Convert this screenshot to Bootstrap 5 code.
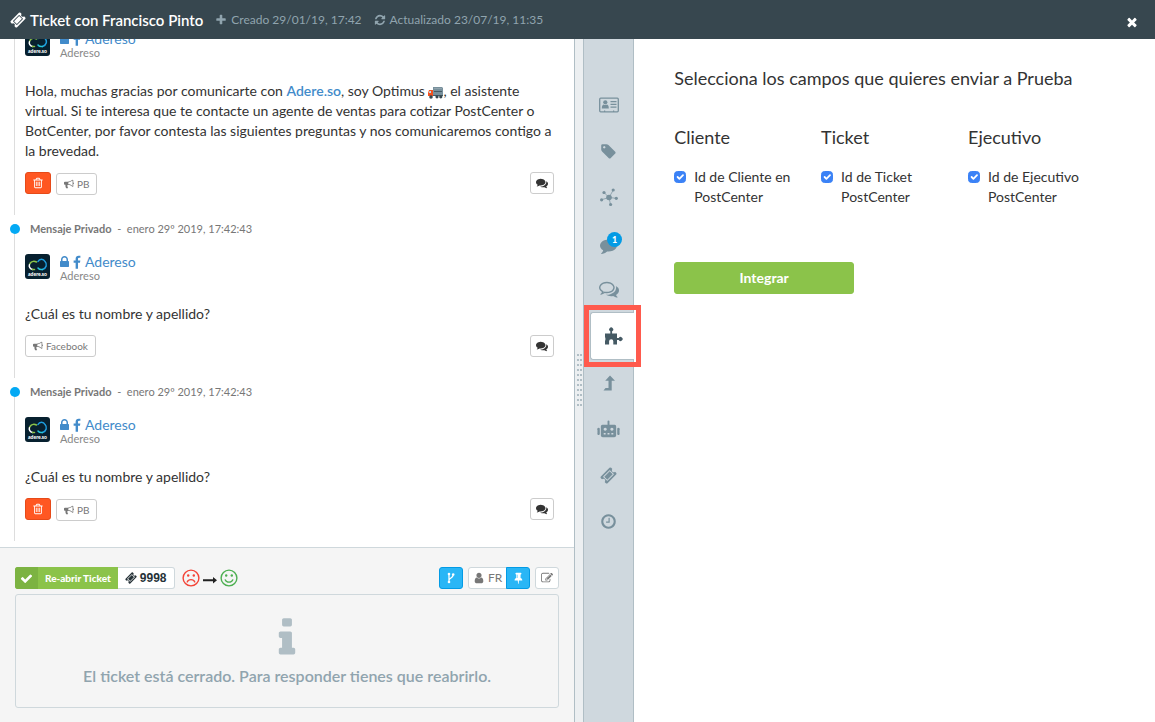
<!DOCTYPE html>
<html lang="es">
<head>
<meta charset="utf-8">
<meta name="viewport" content="width=device-width, initial-scale=1">
<title>Ticket con Francisco Pinto</title>
<link href="https://cdn.jsdelivr.net/npm/bootstrap@5.3.0/dist/css/bootstrap.min.css" rel="stylesheet">
<style>
  :root { --slate: #37474f; --steel: #78909c; --line: #b0bec5; --soft: #cfd8dc; --link: #428bca; --green: #8bc34a; --sky: #29b6f6; }
  body { font-family: Lato, "Liberation Sans", sans-serif; font-size: 14px; line-height: 20px; color: #333; }
  a { color: var(--link); }
  .icon { width: 1em; height: 1em; fill: currentColor; flex: none; display: block; }

  .topbar { background: var(--slate); height: 39px; flex: none; padding: 0 16px 0 10px; }
  .topbar h1 { font-size: 15px; line-height: 20px; font-weight: 600; }
  .topbar .icon { font-size: 12px; }
  .topbar h1 .icon { font-size: 16px; }
  .topbar-meta { color: #90a4ae; font-size: 12px; }
  .topbar .topbar-close .icon { font-size: 14px; }
  .topbar-close { padding-top: 4px; }

  .pane-chat { flex: none; width: 49.8%; border-right: 1px solid var(--line); }
  .pane-form { flex: 1 1 0; min-width: 0; padding: 29px 40px; }

  .timeline { padding: 0 0 6px 14px; }
  .message { border-left: 1px solid #ddd; padding: 0 20px 20px 10px; }
  .message + .message { margin-top: 4px; }
  .message-head { margin: 0 0 15px -15px; gap: 10px; font-size: 11px; line-height: 20px; color: #777; background: linear-gradient(#fff, #fff) 0 0 / 10px 10px no-repeat; }
  .dot { width: 10px; height: 10px; border-radius: 50%; background: #03a9f4; flex: none; }
  .author { gap: 10px; }
  .avatar { width: 25px; height: 25px; }
  .author-name { font-size: 14px; line-height: 16px; gap: 4px; }
  .author-name .icon { width: 9px; }
  .author-name .icon + .icon { width: 8px; }
  .author-sub { font-size: 11px; line-height: 12px; color: #888; }
  .message-text { margin: 22px 0 11px; }
  .message-actions { min-height: 23px; gap: 5px; }
  .truck { width: 15px; height: 13px; vertical-align: -3px; }

  .chip { --bs-btn-padding-x: 7px; --bs-btn-padding-y: 0; --bs-btn-font-size: 10px; --bs-btn-line-height: 20px; --bs-btn-border-radius: 3px;
          --bs-btn-border-color: #ccc; --bs-btn-bg: #fff; --bs-btn-color: #777; display: inline-flex; align-items: center; justify-content: center; gap: 3px; height: 22px; }
  .chip-square { --bs-btn-padding-x: 0; --bs-btn-font-size: 12px; width: 24px; }
  .chip-danger { --bs-btn-bg: #ff5722; --bs-btn-border-color: #e64a19; --bs-btn-color: #fff; width: 26px; }
  .chip-dark { --bs-btn-color: #333; }
  .chip-sky { --bs-btn-bg: var(--sky); --bs-btn-border-color: #039be5; --bs-btn-color: #fff; }
  .chip-footer { --bs-btn-border-color: var(--soft); }
  .chip-owner { --bs-btn-padding-x: 4px; --bs-btn-font-size: 12px; }

  .composer { background: #f5f5f5; border-top: 1px solid var(--soft); padding: 19px 15px 14px; }
  .composer-tools { margin-bottom: 5px; }
  .composer-actions { gap: 5px; }
  .reopen { border: 0; padding: 0; height: 22px; background: var(--green); color: #fff; font-size: 10px; font-weight: 900; border-radius: 3px 0 0 3px; overflow: hidden; }
  .reopen-check { background: #7cb342; width: 23px; height: 22px; font-size: 13px; }
  .reopen-label { padding: 0 7px; }
  .ticket-id { border: 1px solid var(--soft); border-left: 0; background: #fff; height: 22px; padding: 0 7px; gap: 3px; border-radius: 0 3px 3px 0; font: 700 12px/20px "Liberation Sans", sans-serif; color: #263238; }
  .mood { margin-left: 7px; gap: 3px; }
  .mood .icon { font-size: 18px; }
  .mood .mood-arrow { width: 14px; color: #212121; }
  .mood-sad { color: #f44336; }
  .mood-happy { color: #4caf50; }
  .closed-note { border: 1px solid var(--soft); border-radius: 3px; height: 114px; color: #90a4ae; font-size: 16px; font-weight: 600; padding-top: 20px; }
  .closed-note .icon { font-size: 46px; color: var(--line); }
  .closed-note p { padding-top: 5px; }

  .gutter { width: 9px; flex: none; background: #eceff1; border-right: 1px solid var(--line); cursor: col-resize; }
  .grip { width: 5px; height: 54px; background: conic-gradient(from 270deg at 2px 2px, var(--line) 90deg, transparent 0) 0 0 / 3px 5px; }

  .rail { width: 50px; flex: none; background: #cfd8de; border-right: 1px solid var(--line); padding-top: 43px; }
  .rail-item { height: 46px; color: var(--steel); background: none; border: 0; padding: 0; font-size: 20px; }
  .rail-item .icon-sm { font-size: 17px; }
  .rail-item .icon-lg { font-size: 23px; }
  .rail-active { height: 48px; margin: 0 -1px 0 6px; background: #fff; border: solid var(--line); border-width: 1px 0 1px 1px; border-radius: 3px 0 0 3px; color: #455a64; }
  .rail-active::after { content: ""; position: absolute; inset: -8px -7px -8px -7px; border: 5px solid #ff5a4d; pointer-events: none; }
  .rail-count { position: absolute; left: 23px; top: 12px; width: 15px; height: 15px; border-radius: 50%; background: #039be5; color: #fff; font-size: 9px; line-height: 15px; font-weight: 900; }

  .pane-form h2, .pane-form h3 { font-size: 18px; line-height: 20px; font-weight: 400; margin: 0; }
  .pane-form h3 { margin-bottom: 20px; }
  .field-columns { margin-top: 39px; margin-bottom: 55px; }
  .field { display: flex; gap: 8px; }
  .field input { width: 12px; height: 12px; flex: none; margin: 4px 0 0; border-radius: 3px; }
  .field input:checked { background-color: #3b82f6; border-color: #3b82f6; background-size: 12px 12px; }
  .btn-integrate { --bs-btn-bg: var(--green); --bs-btn-border-color: var(--green); --bs-btn-color: #fff; --bs-btn-font-size: 14px; --bs-btn-font-weight: 700; --bs-btn-line-height: 20px; --bs-btn-padding-y: 5px; --bs-btn-border-radius: 3px; width: 180px; }
</style>
</head>
<body class="vh-100 d-flex flex-column overflow-hidden">

<svg class="d-none" aria-hidden="true">
  <symbol id="ticket" viewBox="0 0 1792 1792"><path d="M1024 452l316 316-572 572-316-316zm-211 979l618-618q19-19 19-45t-19-45l-362-362q-18-18-45-18t-45 18l-618 618q-19 19-19 45t19 45l362 362q18 18 45 18t45-18zm889-637l-907 908q-37 37-90.500 37t-90.500-37l-126-126q56-56 56-136t-56-136-136-56-136 56l-125-126q-37-37-37-90.500t37-90.500l907-906q37-37 90.500-37t90.500 37l125 125q-56 56-56 136t56 136 136 56 136-56l126 125q37 37 37 90.500t-37 90.500z"/></symbol>
  <symbol id="check" viewBox="0 0 1792 1792"><path d="M1671 566q0 40-28 68l-724 724-136 136q-28 28-68 28t-68-28l-136-136-362-362q-28-28-28-68t28-68l136-136q28-28 68-28t68 28l294 295 656-657q28-28 68-28t68 28l136 136q28 28 28 68z"/></symbol>
  <symbol id="times" viewBox="0 0 1792 1792"><path d="M1490 1322q0 40-28 68l-136 136q-28 28-68 28t-68-28l-294-294-294 294q-28 28-68 28t-68-28l-136-136q-28-28-28-68t28-68l294-294-294-294q-28-28-28-68t28-68l136-136q28-28 68-28t68 28l294 294 294-294q28-28 68-28t68 28l136 136q28 28 28 68t-28 68l-294 294 294 294q28 28 28 68z"/></symbol>
  <symbol id="plus" viewBox="0 0 1792 1792"><path d="M1600 736v192q0 40-28 68t-68 28h-416v416q0 40-28 68t-68 28h-192q-40 0-68-28t-28-68v-416h-416q-40 0-68-28t-28-68v-192q0-40 28-68t68-28h416v-416q0-40 28-68t68-28h192q40 0 68 28t28 68v416h416q40 0 68 28t28 68z"/></symbol>
  <symbol id="refresh" viewBox="0 0 1792 1792"><path d="M1639 1056q0 5-1 7-64 268-268 434.500t-478 166.500q-146 0-282.500-55t-243.500-157l-129 129q-19 19-45 19t-45-19-19-45v-448q0-26 19-45t45-19h448q26 0 45 19t19 45-19 45l-137 137q71 66 161 102t187 36q134 0 250-65t186-179q11-17 53-117 8-23 30-23h192q13 0 22.500 9.500t9.500 22.500zm25-800v448q0 26-19 45t-45 19h-448q-26 0-45-19t-19-45 19-45l138-138q-148-137-349-137-134 0-250 65t-186 179q-11 17-53 117-8 23-30 23h-199q-13 0-22.500-9.500t-9.500-22.500v-7q65-268 270-434.500t480-166.500q146 0 284 55.500t245 156.500l130-129q19-19 45-19t45 19 19 45z"/></symbol>
  <symbol id="lock" viewBox="320 0 1152 1792"><path d="M640 768h512v-192q0-106-75-181t-181-75-181 75-75 181v192zm832 96v576q0 40-28 68t-68 28h-960q-40 0-68-28t-28-68v-576q0-40 28-68t68-28h32v-192q0-184 132-316t316-132 316 132 132 316v192h32q40 0 68 28t28 68z"/></symbol>
  <symbol id="facebook" viewBox="440 -80 940 1792"><path d="M1343 12v264h-157q-86 0-116 36t-30 108v189h293l-39 296h-254v759h-306v-759h-255v-296h255v-218q0-186 104-288.500t277-102.500q147 0 228 12z"/></symbol>
  <symbol id="trash" viewBox="0 0 1792 1792"><path d="M704 736v576q0 14-9 23t-23 9h-64q-14 0-23-9t-9-23v-576q0-14 9-23t23-9h64q14 0 23 9t9 23zm256 0v576q0 14-9 23t-23 9h-64q-14 0-23-9t-9-23v-576q0-14 9-23t23-9h64q14 0 23 9t9 23zm256 0v576q0 14-9 23t-23 9h-64q-14 0-23-9t-9-23v-576q0-14 9-23t23-9h64q14 0 23 9t9 23zm128 724v-948h-896v948q0 22 7 40.500t14.500 27 10.500 8.500h832q3 0 10.500-8.500t14.500-27 7-40.500zm-672-1076h448l-48-117q-7-9-17-11h-317q-10 2-17 11zm928 32v64q0 14-9 23t-23 9h-96v948q0 83-47 143.500t-113 60.500h-832q-66 0-113-58.500t-47-141.500v-952h-96q-14 0-23-9t-9-23v-64q0-14 9-23t23-9h309l70-167q15-37 54-63t79-26h320q40 0 79 26t54 63l70 167h309q14 0 23 9t9 23z"/></symbol>
  <symbol id="bullhorn" viewBox="0 0 1792 1792"><path d="M1664 640q53 0 90.500 37.500t37.500 90.500-37.500 90.500-90.500 37.500v384q0 52-38 90t-90 38q-417-347-812-380-58 19-91 66t-31 100.500 40 92.500q-20 33-23 65.500t6 58 33.500 55 48 50 61.500 50.500q-29 58-111.500 83t-168.500 11.500-132-55.500q-7-23-29.500-87.500t-32-94.500-23-89-15-101 3.500-98.500 22-110.500h-122q-66 0-113-47t-47-113v-192q0-66 47-113t113-47h480q435 0 896-384 52 0 90 38t38 90v384zm-128 604v-954q-394 302-768 343v270q377 42 768 341z"/></symbol>
  <symbol id="comment" viewBox="0 0 1792 1792"><path d="M1792 896q0 174-120 321.500t-326 233-450 85.500q-70 0-145-8-198 175-460 242-49 14-114 22-17 2-30.500-9t-17.500-29v-1q-3-4-.5-12t2-10 4.500-9.500l6-9 7-8.500 8-9q7-8 31-34.500t34.500-38 31-39.500 32.500-51 27-59 26-76q-157-89-247.500-220t-90.500-281q0-130 71-248.500t191-204.500 286-136.500 348-50.500q244 0 450 85.500t326 233 120 321.500z"/></symbol>
  <symbol id="comments" viewBox="0 0 1792 1792"><path d="M1408 768q0 139-94 257t-256.500 186.500-353.500 68.500q-86 0-176-16-124 88-278 128-36 9-86 16h-3q-11 0-20.500-8t-11.500-21q-1-3-1-6.500t.5-6.500 2-6l2.500-5 3.500-5.500 4-5 4.500-5 4-4.500q5-6 23-25t26-29.500 22.500-29 25-38.500 20.500-44q-124-72-195-177t-71-224q0-139 94-257t256.500-186.500 353.500-68.500 353.500 68.500 256.500 186.500 94 257zm384 256q0 120-71 224.500t-195 176.500q10 24 20.500 44t25 38.500 22.500 29 26 29.500 23 25q1 1 4 4.500t4.500 5 4 5 3.500 5.500l2.500 5 2 6 .5 6.500-1 6.500q-3 14-13 22t-22 7q-50-7-86-16-154-40-278-128-90 16-176 16-271 0-472-132 58 4 88 4 161 0 309-45t264-129q125-92 192-212t67-254q0-77-23-152 129 71 204 178t75 230z"/></symbol>
  <symbol id="comments-o" viewBox="0 0 1792 1792"><path d="M704 384q-153 0-286 52t-211.500 141-78.500 191q0 82 53 158t149 132l97 56-35 84q34-20 62-39l44-31 53 10q78 14 153 14 153 0 286-52t211.500-141 78.500-191-78.500-191-211.500-141-286-52zm0-128q191 0 353.500 68.500t256.500 186.500 94 257-94 257-256.500 186.500-353.500 68.500q-86 0-176-16-124 88-278 128-36 9-86 16h-3q-11 0-20.500-8t-11.500-21q-1-3-1-6.500t.5-6.500 2-6l2.500-5 3.500-5.500 4-5 4.500-5 4-4.500q5-6 23-25t26-29.500 22.500-29 25-38.500 20.500-44q-124-72-195-177t-71-224q0-139 94-257t256.500-186.500 353.500-68.500zm822 1169q10 24 20.500 44t25 38.500 22.500 29 26 29.500 23 25q1 1 4 4.500t4.500 5 4 5 3.500 5.500l2.500 5 2 6 .5 6.500-1 6.500q-3 14-13 22t-22 7q-50-7-86-16-154-40-278-128-90 16-176 16-271 0-472-132 58 4 88 4 161 0 309-45t264-129q125-92 192-212t67-254q0-77-23-152 129 71 204 178t75 230q0 120-71 224.500t-195 176.500z"/></symbol>
  <symbol id="tag" viewBox="0 0 1792 1792"><path d="M576 448q0-53-37.500-90.500t-90.500-37.500-90.500 37.500-37.500 90.500 37.500 90.500 90.500 37.500 90.500-37.500 37.500-90.500zm1067 576q0 53-37 90l-491 492q-39 37-91 37-53 0-90-37l-715-716q-38-37-64.500-101t-26.500-117v-416q0-52 38-90t90-38h416q53 0 117 26.500t102 64.500l715 714q37 39 37 91z"/></symbol>
  <symbol id="user" viewBox="0 0 1792 1792"><path d="M1536 1399q0 109-62.500 187t-150.500 78h-854q-88 0-150.500-78t-62.500-187q0-85 8.500-160.500t31.500-152 58.500-131 94-89 134.500-34.500q131 128 313 128t313-128q76 0 134.500 34.500t94 89 58.500 131 31.500 152 8.500 160.500zm-256-887q0 159-112.500 271.500t-271.500 112.500-271.500-112.500-112.500-271.500 112.500-271.500 271.500-112.500 271.500 112.500 112.500 271.500z"/></symbol>
  <symbol id="pin" viewBox="-64 0 1792 1792"><path d="M800 864v-448q0-14-9-23t-23-9-23 9-9 23v448q0 14 9 23t23 9 23-9 9-23zm672 352q0 26-19 45t-45 19h-429l-51 483q-2 12-10.500 20.500t-20.500 8.500h-1q-27 0-32-27l-76-485h-404q-26 0-45-19t-19-45q0-123 78.500-221.500t177.500-98.500v-512q-52 0-90-38t-38-90 38-90 90-38h640q52 0 90 38t38 90-38 90-90 38v512q99 0 177.500 98.500t78.500 221.500z"/></symbol>
  <symbol id="clock" viewBox="0 0 1792 1792"><path d="M1024 544v448q0 14-9 23t-23 9h-320q-14 0-23-9t-9-23v-64q0-14 9-23t23-9h224v-352q0-14 9-23t23-9h64q14 0 23 9t9 23zm416 352q0-148-73-273t-198-198-273-73-273 73-198 198-73 273 73 273 198 198 273 73 273-73 198-198 73-273zm224 0q0 209-103 385.500t-279.500 279.500-385.500 103-385.500-103-279.500-279.500-103-385.500 103-385.500 279.500-279.500 385.500-103 385.500 103 279.500 279.500 103 385.500z"/></symbol>
  <symbol id="info" viewBox="0 0 1792 1792"><path d="M1216 1344v128q0 26-19 45t-45 19h-512q-26 0-45-19t-19-45v-128q0-26 19-45t45-19h64v-384h-64q-26 0-45-19t-19-45v-128q0-26 19-45t45-19h384q26 0 45 19t19 45v576h64q26 0 45 19t19 45zm-128-1152v192q0 26-19 45t-45 19h-256q-26 0-45-19t-19-45v-192q0-26 19-45t45-19h256q26 0 45 19t19 45z"/></symbol>
  <symbol id="edit" viewBox="0 0 1792 1792"><path d="M888 1184l116-116-152-152-116 116v56h96v96h56zm440-720q-16-16-33 1l-350 350q-17 17-1 33t33-1l350-350q17-17 1-33zm80 594v190q0 119-84.500 203.500t-203.500 84.500h-832q-119 0-203.500-84.500t-84.500-203.500v-832q0-119 84.500-203.500t203.500-84.500h832q63 0 117 25 15 7 18 23 3 17-9 29l-49 49q-14 14-32 8-23-6-45-6h-832q-66 0-113 47t-47 113v832q0 66 47 113t113 47h832q66 0 113-47t47-113v-126q0-13 9-22l64-64q15-15 35-7t20 29zm-96-738l288 288-672 672h-288v-288zm444 132l-92 92-288-288 92-92q28-28 68-28t68 28l152 152q28 28 28 68t-28 68z"/></symbol>
  <symbol id="fork" viewBox="0 0 12 12"><path d="M4 2v8M4 8.200c0-2 4.200-2 4.200-5.500" fill="none" stroke="currentColor" stroke-width="1.300"/><circle cx="4" cy="2" r="1.300"/><circle cx="8.200" cy="2.500" r="1.300"/><circle cx="4" cy="10" r="1.300"/></symbol>
  <symbol id="id-card" viewBox="0 0 20 20"><rect x=".7" y="3.200" width="18.600" height="13.600" rx="1" fill="none" stroke="currentColor" stroke-width="1.300"/><circle cx="6.300" cy="7.300" r="2.100"/><path d="M2.800 13.500c0-3 1-4 2-4q1.500 1 3 0c1 0 2 1 2 4zM11.500 6h6v1.200h-6zM11.500 8.800h6V10h-6zM11.500 11.600h6v1.200h-6zM5 15.500h1.200V17H5zM14 15.500h1.200V17H14z"/></symbol>
  <symbol id="network" viewBox="0 0 20 20"><path d="M10 10.500 5 5.500M10 10.500l4-7M10 10.500l7.500.8M10 10.500l1.500 7M10 10.500l-7.500 2.200" fill="none" stroke="currentColor" stroke-width=".7"/><circle cx="10" cy="10.500" r="2.800"/><circle cx="5" cy="5.500" r="1.600"/><circle cx="14.200" cy="3" r="1.600"/><circle cx="17.300" cy="11.300" r="1.600"/><circle cx="11.600" cy="17.500" r="1.600"/><circle cx="2.600" cy="12.800" r="1.600"/></symbol>
  <symbol id="puzzle" viewBox="0 0 20 20"><path d="M2 7.500h5.300V5.300a2 2 0 1 1 1.800 0v2.200H14v4.600h1.800a2 2 0 1 1 0 1.900H14v4.500h-3.700v-3.200a2.100 2.100 0 0 0-4.200 0v3.200H2v-3.500c.6-1.300.6-2.700 0-4z"/></symbol>
  <symbol id="level-up" viewBox="0 0 20 20"><path d="M11 2.500l5 5.200h-3.300v9.800H4.500l2-2.600h3V7.700H6.200z"/></symbol>
  <symbol id="robot" viewBox="0 0 24 24"><path fill-rule="evenodd" d="M11 3.500a1 1 0 0 1 2 0V7h5.500A1.800 1.800 0 0 1 20 8.800v9.400A2 2 0 0 1 18 20H6a2 2 0 0 1-2-1.800V8.800A1.800 1.800 0 0 1 5.700 7H11zM8.500 10.200a1.600 1.600 0 1 0 .1 0zM15.500 10.200a1.600 1.600 0 1 0 .1 0zM7 15.700v1.500h2v-1.500zM11 15.700v1.500h2v-1.500zM15 15.700v1.500h2v-1.500zM.5 12.500A1.200 1.200 0 0 1 2.900 11v6a1.200 1.200 0 0 1-2.400-1zM23.500 12.500A1.200 1.200 0 0 0 21.100 11v6a1.200 1.200 0 0 0 2.400-1z"/></symbol>
  <symbol id="sad" viewBox="0 0 18 18"><circle cx="9" cy="9" r="7.900" fill="none" stroke="currentColor" stroke-width="1.400"/><circle cx="6.200" cy="6.500" r="1.200"/><circle cx="11.800" cy="6.500" r="1.200"/><path d="M5.200 13c1.200-3.200 6.400-3.200 7.600 0" fill="none" stroke="currentColor" stroke-width="1.300" stroke-linecap="round"/></symbol>
  <symbol id="happy" viewBox="0 0 18 18"><circle cx="9" cy="9" r="7.900" fill="none" stroke="currentColor" stroke-width="1.400"/><circle cx="6.200" cy="6.500" r="1.200"/><circle cx="11.800" cy="6.500" r="1.200"/><path d="M5.200 10.800c1.200 3.200 6.400 3.200 7.600 0" fill="none" stroke="currentColor" stroke-width="1.300" stroke-linecap="round"/></symbol>
  <symbol id="arrow" viewBox="0 0 14 18"><path d="M0 10.300h10V8l4 3.300-4 3.200v-2.200H0z"/></symbol>
  <symbol id="logo" viewBox="0 0 25 25"><rect width="25" height="25" rx="3" fill="#07202f"/><g fill="none" stroke-width="1.500" stroke-linecap="round"><path d="M7.500 15.500a3.700 3.700 0 0 1-3-5" stroke="#fff"/><path d="M5 9.500C6.500 7 9.500 7 11.500 8" stroke="#8bc34a"/><path d="M13 7.500C14.500 4.500 18.500 4.500 20 7.500c2.500 2.500 1.500 7-2.500 8" stroke="#1e9fe0"/><path d="M17.500 15.500c-2 .3-3.500-.2-4.500-1.500" stroke="#26c6da"/><path d="M7.500 15.500h2" stroke="#8bc34a"/></g><text x="12.500" y="21.500" text-anchor="middle" font-family="Lato" font-weight="900" font-size="5" fill="#fff">adere.so</text></symbol>
</svg>

<header class="topbar d-flex align-items-center text-white">
  <h1 class="d-flex align-items-center gap-1 m-0"><svg class="icon"><use href="#ticket"/></svg>Ticket con Francisco Pinto</h1>
  <span class="topbar-meta d-flex align-items-center gap-1 ms-2 ps-1"><svg class="icon"><use href="#plus"/></svg>Creado 29/01/19, 17:42</span>
  <span class="topbar-meta d-flex align-items-center gap-1 ms-2 ps-1"><svg class="icon"><use href="#refresh"/></svg>Actualizado 23/07/19, 11:35</span>
  <button class="topbar-close btn p-0 border-0 text-white ms-auto" type="button" aria-label="Cerrar"><svg class="icon mt-1"><use href="#times"/></svg></button>
</header>

<main class="d-flex flex-grow-1 overflow-hidden">
  <section class="pane-chat d-flex flex-column">
    <div class="timeline flex-grow-1 d-flex flex-column justify-content-end overflow-hidden">

      <article class="message">
        <div class="author d-flex">
          <svg class="avatar" role="img" aria-label="Adereso"><use href="#logo"/></svg>
          <div>
            <a class="author-name d-flex align-items-center text-decoration-none" href="#"><svg class="icon"><use href="#lock"/></svg><svg class="icon"><use href="#facebook"/></svg><span>Adereso</span></a>
            <div class="author-sub">Adereso</div>
          </div>
        </div>
        <p class="message-text">Hola, muchas gracias por comunicarte con <a class="text-decoration-none fw-semibold" href="#">Adere.so</a>, soy Optimus <svg class="truck" viewBox="0 0 15 13" role="img" aria-label="camión"><path fill="#78909c" d="M5 1h9l1 1v7H5z"/><path fill="#90a4ae" d="M6 2h8v1H6z"/><path fill="#455a64" d="M6 5h8v1H6zM2 10h13V9H5z"/><path fill="#f4511e" d="M1 4h4v6H0V7z"/><path fill="#b3e5fc" d="M1.500 5H3v2H1z"/><g fill="#37474f"><circle cx="3" cy="11" r="1.800"/><circle cx="9" cy="10.800" r="1.600"/><circle cx="12.800" cy="10.800" r="1.600"/></g></svg>, el asistente virtual. Si te interesa que te contacte un agente de ventas para cotizar PostCenter o BotCenter, por favor contesta las siguientes preguntas y nos comunicaremos contigo a la brevedad.</p>
        <div class="message-actions d-flex">
          <button class="btn chip chip-square chip-danger" type="button" aria-label="Eliminar"><svg class="icon"><use href="#trash"/></svg></button>
          <button class="btn chip align-self-end" type="button"><svg class="icon"><use href="#bullhorn"/></svg>PB</button>
          <button class="btn chip chip-square chip-dark ms-auto" type="button" aria-label="Comentarios"><svg class="icon"><use href="#comments"/></svg></button>
        </div>
      </article>

      <article class="message">
        <div class="message-head d-flex align-items-center"><span class="dot"></span><span><b>Mensaje Privado</b>&nbsp; -&nbsp; enero 29º 2019, 17:42:43</span></div>
        <div class="author d-flex">
          <svg class="avatar" role="img" aria-label="Adereso"><use href="#logo"/></svg>
          <div>
            <a class="author-name d-flex align-items-center text-decoration-none" href="#"><svg class="icon"><use href="#lock"/></svg><svg class="icon"><use href="#facebook"/></svg><span>Adereso</span></a>
            <div class="author-sub">Adereso</div>
          </div>
        </div>
        <p class="message-text">¿Cuál es tu nombre y apellido?</p>
        <div class="message-actions d-flex">
          <button class="btn chip" type="button"><svg class="icon"><use href="#bullhorn"/></svg>Facebook</button>
          <button class="btn chip chip-square chip-dark ms-auto" type="button" aria-label="Comentarios"><svg class="icon"><use href="#comments"/></svg></button>
        </div>
      </article>

      <article class="message">
        <div class="message-head d-flex align-items-center"><span class="dot"></span><span><b>Mensaje Privado</b>&nbsp; -&nbsp; enero 29º 2019, 17:42:43</span></div>
        <div class="author d-flex">
          <svg class="avatar" role="img" aria-label="Adereso"><use href="#logo"/></svg>
          <div>
            <a class="author-name d-flex align-items-center text-decoration-none" href="#"><svg class="icon"><use href="#lock"/></svg><svg class="icon"><use href="#facebook"/></svg><span>Adereso</span></a>
            <div class="author-sub">Adereso</div>
          </div>
        </div>
        <p class="message-text">¿Cuál es tu nombre y apellido?</p>
        <div class="message-actions d-flex">
          <button class="btn chip chip-square chip-danger" type="button" aria-label="Eliminar"><svg class="icon"><use href="#trash"/></svg></button>
          <button class="btn chip align-self-end" type="button"><svg class="icon"><use href="#bullhorn"/></svg>PB</button>
          <button class="btn chip chip-square chip-dark ms-auto" type="button" aria-label="Comentarios"><svg class="icon"><use href="#comments"/></svg></button>
        </div>
      </article>
    </div>

    <footer class="composer">
      <div class="composer-tools d-flex align-items-center">
        <button class="reopen d-flex align-items-center" type="button"><span class="reopen-check d-flex align-items-center justify-content-center"><svg class="icon"><use href="#check"/></svg></span><span class="reopen-label">Re-abrir Ticket</span></button>
        <span class="ticket-id d-flex align-items-center"><svg class="icon"><use href="#ticket"/></svg>9998</span>
        <span class="mood d-flex align-items-center"><svg class="icon mood-sad"><use href="#sad"/></svg><svg class="icon mood-arrow"><use href="#arrow"/></svg><svg class="icon mood-happy"><use href="#happy"/></svg></span>
        <div class="composer-actions d-flex ms-auto">
          <button class="btn chip chip-square chip-sky" type="button" aria-label="Derivar"><svg class="icon"><use href="#fork"/></svg></button>
          <div class="btn-group">
            <button class="btn chip chip-footer chip-owner" type="button"><svg class="icon"><use href="#user"/></svg>FR</button>
            <button class="btn chip chip-square chip-sky" type="button" aria-label="Fijar"><svg class="icon"><use href="#pin"/></svg></button>
          </div>
          <button class="btn chip chip-square chip-footer" type="button" aria-label="Editar"><svg class="icon"><use href="#edit"/></svg></button>
        </div>
      </div>
      <div class="closed-note d-flex flex-column align-items-center">
        <svg class="icon"><use href="#info"/></svg>
        <p class="m-0">El ticket está cerrado. Para responder tienes que reabrirlo.</p>
      </div>
    </footer>
  </section>

  <div class="gutter d-flex align-items-center justify-content-center"><span class="grip"></span></div>

  <nav class="rail d-flex flex-column" aria-label="Secciones">
    <button class="rail-item d-flex align-items-center justify-content-center" type="button" aria-label="Cliente"><svg class="icon"><use href="#id-card"/></svg></button>
    <button class="rail-item d-flex align-items-center justify-content-center" type="button" aria-label="Etiquetas"><svg class="icon icon-sm"><use href="#tag"/></svg></button>
    <button class="rail-item d-flex align-items-center justify-content-center" type="button" aria-label="Red"><svg class="icon"><use href="#network"/></svg></button>
    <button class="rail-item position-relative d-flex align-items-center justify-content-center" type="button" aria-label="Notas"><svg class="icon icon-sm mt-1"><use href="#comment"/></svg><span class="rail-count">1</span></button>
    <button class="rail-item d-flex align-items-center justify-content-center" type="button" aria-label="Conversaciones"><svg class="icon"><use href="#comments-o"/></svg></button>
    <button class="rail-item rail-active position-relative d-flex align-items-center justify-content-center" type="button" aria-label="Integraciones"><svg class="icon"><use href="#puzzle"/></svg></button>
    <button class="rail-item d-flex align-items-center justify-content-center" type="button" aria-label="Escalar"><svg class="icon"><use href="#level-up"/></svg></button>
    <button class="rail-item d-flex align-items-center justify-content-center" type="button" aria-label="Bot"><svg class="icon icon-lg"><use href="#robot"/></svg></button>
    <button class="rail-item d-flex align-items-center justify-content-center" type="button" aria-label="Tickets"><svg class="icon icon-sm"><use href="#ticket"/></svg></button>
    <button class="rail-item d-flex align-items-center justify-content-center" type="button" aria-label="Historial"><svg class="icon icon-sm"><use href="#clock"/></svg></button>
  </nav>

  <form class="pane-form">
    <h2>Selecciona los campos que quieres enviar a Prueba</h2>
    <div class="field-columns row g-0">
      <div class="col-4">
        <h3>Cliente</h3>
        <label class="field" for="f-cliente"><input class="form-check-input" type="checkbox" id="f-cliente" checked><span>Id de Cliente en PostCenter</span></label>
      </div>
      <div class="col-4">
        <h3>Ticket</h3>
        <label class="field" for="f-ticket"><input class="form-check-input" type="checkbox" id="f-ticket" checked><span>Id de Ticket PostCenter</span></label>
      </div>
      <div class="col-4">
        <h3>Ejecutivo</h3>
        <label class="field" for="f-ejecutivo"><input class="form-check-input" type="checkbox" id="f-ejecutivo" checked><span>Id de Ejecutivo PostCenter</span></label>
      </div>
    </div>
    <button class="btn btn-integrate" type="button">Integrar</button>
  </form>
</main>

<script src="https://cdn.jsdelivr.net/npm/bootstrap@5.3.0/dist/js/bootstrap.bundle.min.js"></script>
</body>
</html>
